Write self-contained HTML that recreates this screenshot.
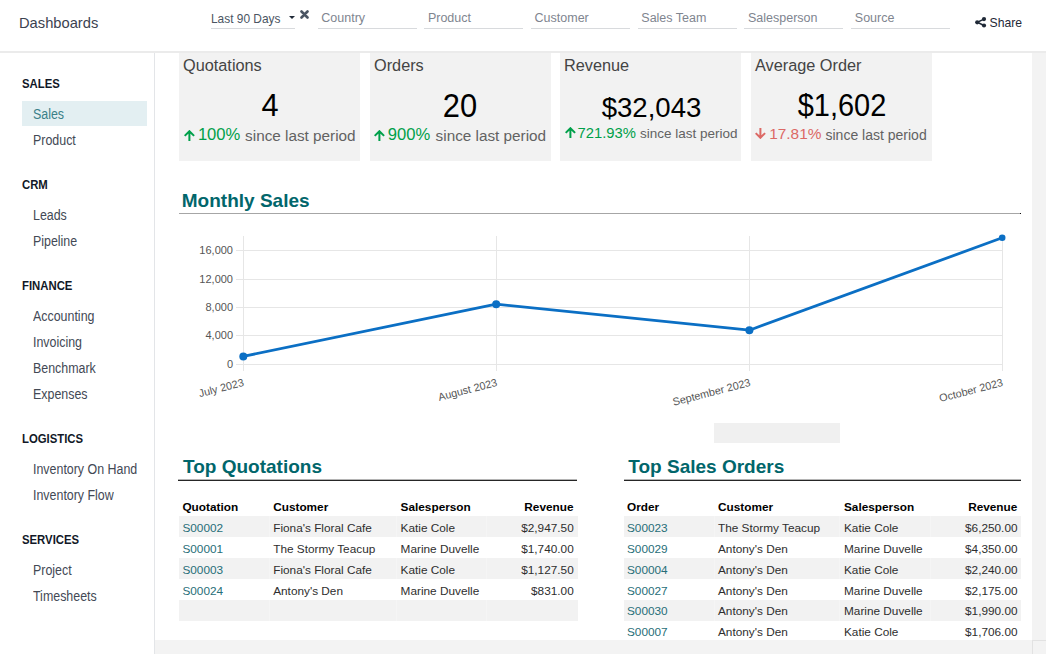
<!DOCTYPE html>
<html><head><meta charset="utf-8"><title>Dashboards</title>
<style>
html,body{margin:0;padding:0;width:1046px;height:654px;overflow:hidden;background:#fff}
body{position:relative;font-family:"Liberation Sans",sans-serif}
.t{position:absolute;white-space:nowrap;line-height:1}
.r{position:absolute}
</style></head><body>
<div class="r" style="left:0px;top:51px;width:1046px;height:2px;background:#ebebeb;"></div>
<div class="t" style="left:18.80px;top:15.20px;font-size:15px;color:#3b4250;transform:scaleX(0.98);transform-origin:0 0;">Dashboards</div>
<div class="r" style="left:211px;top:28px;width:84px;height:1px;background:#d8dadd;"></div>
<div class="t" style="left:211.00px;top:13.93px;font-size:11.9px;color:#4b5563;">Last 90 Days</div>
<div class="r" style="left:289px;top:16px;width:0;height:0;border-left:3px solid transparent;border-right:3px solid transparent;border-top:3.6px solid #1f2937;background:none"></div>
<svg class="r" style="left:300.2px;top:9.6px" width="9" height="9" viewBox="0 0 9 9"><path d="M1.5 1.5L7.5 7.5M7.5 1.5L1.5 7.5" stroke="#4b5563" stroke-width="2.6" stroke-linecap="round"/></svg>
<div class="r" style="left:318px;top:28px;width:99px;height:1px;background:#d8dadd;"></div>
<div class="t" style="left:321.30px;top:12.42px;font-size:12.5px;color:#80858f;">Country</div>
<div class="r" style="left:424px;top:28px;width:99px;height:1px;background:#d8dadd;"></div>
<div class="t" style="left:427.90px;top:12.42px;font-size:12.5px;color:#80858f;">Product</div>
<div class="r" style="left:531px;top:28px;width:99px;height:1px;background:#d8dadd;"></div>
<div class="t" style="left:534.60px;top:12.42px;font-size:12.5px;color:#80858f;">Customer</div>
<div class="r" style="left:638px;top:28px;width:99px;height:1px;background:#d8dadd;"></div>
<div class="t" style="left:641.30px;top:12.42px;font-size:12.5px;color:#80858f;">Sales Team</div>
<div class="r" style="left:744px;top:28px;width:99px;height:1px;background:#d8dadd;"></div>
<div class="t" style="left:748.00px;top:12.42px;font-size:12.5px;color:#80858f;">Salesperson</div>
<div class="r" style="left:851px;top:28px;width:99px;height:1px;background:#d8dadd;"></div>
<div class="t" style="left:854.80px;top:12.42px;font-size:12.5px;color:#80858f;">Source</div>
<svg class="r" style="left:974.8px;top:16.6px" width="12" height="11" viewBox="0 0 12 11"><path d="M9 2.1L2.3 5.3L9 8.5" stroke="#1f2937" stroke-width="1.5" fill="none"/><circle cx="9" cy="2.1" r="2.1" fill="#1f2937"/><circle cx="2.2" cy="5.3" r="2.1" fill="#1f2937"/><circle cx="9" cy="8.5" r="2.1" fill="#1f2937"/></svg>
<div class="t" style="left:989.50px;top:17.37px;font-size:12.2px;color:#1f2937;">Share</div>
<div class="r" style="left:154px;top:53px;width:1px;height:601px;background:#e3e5e8;"></div>
<div class="r" style="left:22px;top:101px;width:125px;height:25px;background:#e3eff2;"></div>
<div class="t" style="left:22.00px;top:78.43px;font-size:12.6px;color:#111827;font-weight:700;transform:scaleX(0.9);transform-origin:0 0;">SALES</div>
<div class="t" style="left:33.00px;top:108.07px;font-size:13.8px;color:#3a8088;transform:scaleX(0.9);transform-origin:0 0;">Sales</div>
<div class="t" style="left:33.00px;top:134.07px;font-size:13.8px;color:#434955;transform:scaleX(0.9);transform-origin:0 0;">Product</div>
<div class="t" style="left:22.00px;top:179.43px;font-size:12.6px;color:#111827;font-weight:700;transform:scaleX(0.9);transform-origin:0 0;">CRM</div>
<div class="t" style="left:33.00px;top:209.07px;font-size:13.8px;color:#434955;transform:scaleX(0.9);transform-origin:0 0;">Leads</div>
<div class="t" style="left:33.00px;top:235.07px;font-size:13.8px;color:#434955;transform:scaleX(0.9);transform-origin:0 0;">Pipeline</div>
<div class="t" style="left:22.00px;top:280.43px;font-size:12.6px;color:#111827;font-weight:700;transform:scaleX(0.9);transform-origin:0 0;">FINANCE</div>
<div class="t" style="left:33.00px;top:310.07px;font-size:13.8px;color:#434955;transform:scaleX(0.9);transform-origin:0 0;">Accounting</div>
<div class="t" style="left:33.00px;top:336.07px;font-size:13.8px;color:#434955;transform:scaleX(0.9);transform-origin:0 0;">Invoicing</div>
<div class="t" style="left:33.00px;top:362.07px;font-size:13.8px;color:#434955;transform:scaleX(0.9);transform-origin:0 0;">Benchmark</div>
<div class="t" style="left:33.00px;top:388.07px;font-size:13.8px;color:#434955;transform:scaleX(0.9);transform-origin:0 0;">Expenses</div>
<div class="t" style="left:22.00px;top:433.43px;font-size:12.6px;color:#111827;font-weight:700;transform:scaleX(0.9);transform-origin:0 0;">LOGISTICS</div>
<div class="t" style="left:33.00px;top:463.07px;font-size:13.8px;color:#434955;transform:scaleX(0.9);transform-origin:0 0;">Inventory On Hand</div>
<div class="t" style="left:33.00px;top:489.07px;font-size:13.8px;color:#434955;transform:scaleX(0.9);transform-origin:0 0;">Inventory Flow</div>
<div class="t" style="left:22.00px;top:534.43px;font-size:12.6px;color:#111827;font-weight:700;transform:scaleX(0.9);transform-origin:0 0;">SERVICES</div>
<div class="t" style="left:33.00px;top:564.07px;font-size:13.8px;color:#434955;transform:scaleX(0.9);transform-origin:0 0;">Project</div>
<div class="t" style="left:33.00px;top:590.07px;font-size:13.8px;color:#434955;transform:scaleX(0.9);transform-origin:0 0;">Timesheets</div>
<div class="r" style="left:179px;top:53px;width:181px;height:108px;background:#f2f2f2;"></div>
<div class="t" style="left:183.00px;top:56.80px;font-size:16.3px;color:#444444;">Quotations</div>
<div class="t" style="left:119.50px;width:300px;text-align:center;top:89.31px;font-size:32px;color:#000000;transform:scaleX(0.96);">4</div>
<svg class="r" style="left:183.5px;top:129.7px" width="11" height="11" viewBox="0 0 11 11"><path d="M5.4 11V1.2M0.7 5.9L5.4 1.2L10.1 5.9" stroke="#00a04a" stroke-width="2" fill="none"/></svg>
<div class="t" style="left:197.90px;top:126.95px;font-size:16.6px;color:#00a04a;">100%</div>
<div class="t" style="left:245.10px;top:128.05px;font-size:15.3px;color:#626262;">since last period</div>
<div class="r" style="left:370px;top:53px;width:181px;height:108px;background:#f2f2f2;"></div>
<div class="t" style="left:374.00px;top:56.80px;font-size:16.3px;color:#444444;">Orders</div>
<div class="t" style="left:310.00px;width:300px;text-align:center;top:90.29px;font-size:32.5px;color:#000000;transform:scaleX(0.95);">20</div>
<svg class="r" style="left:373.8px;top:129.7px" width="11" height="11" viewBox="0 0 11 11"><path d="M5.4 11V1.2M0.7 5.9L5.4 1.2L10.1 5.9" stroke="#00a04a" stroke-width="2" fill="none"/></svg>
<div class="t" style="left:387.80px;top:126.95px;font-size:16.6px;color:#00a04a;">900%</div>
<div class="t" style="left:435.60px;top:128.05px;font-size:15.3px;color:#626262;">since last period</div>
<div class="r" style="left:560px;top:53px;width:181px;height:108px;background:#f2f2f2;"></div>
<div class="t" style="left:564.00px;top:56.80px;font-size:16.3px;color:#444444;">Revenue</div>
<div class="t" style="left:501.50px;width:300px;text-align:center;top:93.74px;font-size:27.6px;color:#000000;transform:scaleX(1.0);">$32,043</div>
<svg class="r" style="left:565.2px;top:127.2px" width="11" height="11" viewBox="0 0 11 11"><path d="M5.4 11V1.2M0.7 5.9L5.4 1.2L10.1 5.9" stroke="#00a04a" stroke-width="2" fill="none"/></svg>
<div class="t" style="left:577.50px;top:125.97px;font-size:14.8px;color:#00a04a;">721.93%</div>
<div class="t" style="left:639.90px;top:127.07px;font-size:13.5px;color:#626262;">since last period</div>
<div class="r" style="left:751px;top:53px;width:181px;height:108px;background:#f2f2f2;"></div>
<div class="t" style="left:755.00px;top:56.80px;font-size:16.3px;color:#444444;">Average Order</div>
<div class="t" style="left:692.00px;width:300px;text-align:center;top:90.18px;font-size:30.5px;color:#000000;transform:scaleX(0.95);">$1,602</div>
<svg class="r" style="left:755.1px;top:128.1px" width="11" height="11" viewBox="0 0 11 11"><path d="M5.4 0V9.8M0.7 5.1L5.4 9.8L10.1 5.1" stroke="#dc6965" stroke-width="2" fill="none"/></svg>
<div class="t" style="left:769.20px;top:126.36px;font-size:15.4px;color:#dc6965;">17.81%</div>
<div class="t" style="left:825.50px;top:127.55px;font-size:14px;color:#626262;">since last period</div>
<div class="t" style="left:181.80px;top:190.72px;font-size:19px;color:#01666b;font-weight:700;">Monthly Sales</div>
<div class="r" style="left:179px;top:213px;width:841px;height:1px;background:#a6a6a6;"></div>
<div class="r" style="left:1020px;top:213px;width:1px;height:1px;background:#111111;"></div>
<svg class="r" style="left:0;top:0" width="1046" height="654" viewBox="0 0 1046 654"><line x1="236" y1="250.5" x2="1003" y2="250.5" stroke="#e6e6e6" stroke-width="1"/><line x1="236" y1="279.5" x2="1003" y2="279.5" stroke="#e6e6e6" stroke-width="1"/><line x1="236" y1="307.5" x2="1003" y2="307.5" stroke="#e6e6e6" stroke-width="1"/><line x1="236" y1="335.5" x2="1003" y2="335.5" stroke="#e6e6e6" stroke-width="1"/><line x1="236" y1="364.5" x2="1003" y2="364.5" stroke="#e6e6e6" stroke-width="1"/><line x1="243.5" y1="236" x2="243.5" y2="371" stroke="#e6e6e6" stroke-width="1"/><line x1="496.5" y1="236" x2="496.5" y2="371" stroke="#e6e6e6" stroke-width="1"/><line x1="749.5" y1="236" x2="749.5" y2="371" stroke="#e6e6e6" stroke-width="1"/><line x1="1002.5" y1="236" x2="1002.5" y2="371" stroke="#e6e6e6" stroke-width="1"/><polyline points="243.3,356.4 496.2,304.2 749.4,330.2 1002.2,237.8" fill="none" stroke="#0b6fc4" stroke-width="2.8" stroke-linejoin="round"/><circle cx="243.3" cy="356.4" r="4" fill="#0b6fc4"/><circle cx="496.2" cy="304.2" r="4" fill="#0b6fc4"/><circle cx="749.4" cy="330.2" r="4" fill="#0b6fc4"/><circle cx="1002.2" cy="237.8" r="3.3" fill="#0b6fc4"/></svg>
<div class="t" style="right:813.00px;top:244.59px;font-size:11px;color:#555555;">16,000</div>
<div class="t" style="right:813.00px;top:273.59px;font-size:11px;color:#555555;">12,000</div>
<div class="t" style="right:813.00px;top:301.59px;font-size:11px;color:#555555;">8,000</div>
<div class="t" style="right:813.00px;top:329.59px;font-size:11px;color:#555555;">4,000</div>
<div class="t" style="right:813.00px;top:358.59px;font-size:11px;color:#555555;">0</div>
<div class="t" style="right:803.3px;top:376.5px;font-size:10.8px;line-height:11px;color:#555555;transform:rotate(-14.5deg);transform-origin:100% 0">July 2023</div>
<div class="t" style="right:550.3px;top:376.5px;font-size:10.8px;line-height:11px;color:#555555;transform:rotate(-14.5deg);transform-origin:100% 0">August 2023</div>
<div class="t" style="right:297.3px;top:376.5px;font-size:10.8px;line-height:11px;color:#555555;transform:rotate(-14.5deg);transform-origin:100% 0">September 2023</div>
<div class="t" style="right:44.3px;top:376.5px;font-size:10.8px;line-height:11px;color:#555555;transform:rotate(-14.5deg);transform-origin:100% 0">October 2023</div>
<div class="r" style="left:714px;top:423px;width:126px;height:20px;background:#f0f0f0;"></div>
<div class="t" style="left:183.00px;top:456.92px;font-size:19px;color:#01666b;font-weight:700;">Top Quotations</div>
<div class="r" style="left:178px;top:479px;width:399px;height:1px;background:#b4b4b4;"></div>
<div class="r" style="left:178px;top:480px;width:399px;height:1px;background:#262626;"></div>
<div class="t" style="left:182.40px;top:501.51px;font-size:11.8px;color:#000000;font-weight:700;">Quotation</div>
<div class="t" style="left:273.20px;top:501.51px;font-size:11.8px;color:#000000;font-weight:700;">Customer</div>
<div class="t" style="left:400.60px;top:501.51px;font-size:11.8px;color:#000000;font-weight:700;">Salesperson</div>
<div class="t" style="right:472.50px;top:501.51px;font-size:11.8px;color:#000000;font-weight:700;">Revenue</div>
<div class="r" style="left:178.5px;top:516.3px;width:399px;height:20.9px;background:#f2f2f2;"></div>
<div class="r" style="left:269px;top:516.3px;width:1px;height:20.9px;background:#f5f5f5;"></div>
<div class="r" style="left:396px;top:516.3px;width:1px;height:20.9px;background:#f5f5f5;"></div>
<div class="r" style="left:486px;top:516.3px;width:1px;height:20.9px;background:#f5f5f5;"></div>
<div class="r" style="left:178.5px;top:558.0px;width:399px;height:20.9px;background:#f2f2f2;"></div>
<div class="r" style="left:269px;top:558.0px;width:1px;height:20.9px;background:#f5f5f5;"></div>
<div class="r" style="left:396px;top:558.0px;width:1px;height:20.9px;background:#f5f5f5;"></div>
<div class="r" style="left:486px;top:558.0px;width:1px;height:20.9px;background:#f5f5f5;"></div>
<div class="r" style="left:178.5px;top:599.7px;width:399px;height:20.9px;background:#f2f2f2;"></div>
<div class="r" style="left:269px;top:599.7px;width:1px;height:20.9px;background:#f5f5f5;"></div>
<div class="r" style="left:396px;top:599.7px;width:1px;height:20.9px;background:#f5f5f5;"></div>
<div class="r" style="left:486px;top:599.7px;width:1px;height:20.9px;background:#f5f5f5;"></div>
<div class="t" style="left:182.40px;top:523.21px;font-size:11.8px;color:#276e78;">S00002</div>
<div class="t" style="left:273.20px;top:523.21px;font-size:11.8px;color:#2e2e2e;">Fiona's Floral Cafe</div>
<div class="t" style="left:400.60px;top:523.21px;font-size:11.8px;color:#2e2e2e;">Katie Cole</div>
<div class="t" style="right:472.30px;top:523.21px;font-size:11.8px;color:#2e2e2e;">$2,947.50</div>
<div class="t" style="left:182.40px;top:544.01px;font-size:11.8px;color:#276e78;">S00001</div>
<div class="t" style="left:273.20px;top:544.01px;font-size:11.8px;color:#2e2e2e;">The Stormy Teacup</div>
<div class="t" style="left:400.60px;top:544.01px;font-size:11.8px;color:#2e2e2e;">Marine Duvelle</div>
<div class="t" style="right:472.30px;top:544.01px;font-size:11.8px;color:#2e2e2e;">$1,740.00</div>
<div class="t" style="left:182.40px;top:564.81px;font-size:11.8px;color:#276e78;">S00003</div>
<div class="t" style="left:273.20px;top:564.81px;font-size:11.8px;color:#2e2e2e;">Fiona's Floral Cafe</div>
<div class="t" style="left:400.60px;top:564.81px;font-size:11.8px;color:#2e2e2e;">Katie Cole</div>
<div class="t" style="right:472.30px;top:564.81px;font-size:11.8px;color:#2e2e2e;">$1,127.50</div>
<div class="t" style="left:182.40px;top:585.61px;font-size:11.8px;color:#276e78;">S00024</div>
<div class="t" style="left:273.20px;top:585.61px;font-size:11.8px;color:#2e2e2e;">Antony's Den</div>
<div class="t" style="left:400.60px;top:585.61px;font-size:11.8px;color:#2e2e2e;">Marine Duvelle</div>
<div class="t" style="right:472.30px;top:585.61px;font-size:11.8px;color:#2e2e2e;">$831.00</div>
<div class="t" style="left:628.30px;top:456.92px;font-size:19px;color:#01666b;font-weight:700;">Top Sales Orders</div>
<div class="r" style="left:624px;top:479px;width:397px;height:1px;background:#b4b4b4;"></div>
<div class="r" style="left:624px;top:480px;width:397px;height:1px;background:#262626;"></div>
<div class="t" style="left:627.00px;top:501.51px;font-size:11.8px;color:#000000;font-weight:700;">Order</div>
<div class="t" style="left:718.00px;top:501.51px;font-size:11.8px;color:#000000;font-weight:700;">Customer</div>
<div class="t" style="left:844.00px;top:501.51px;font-size:11.8px;color:#000000;font-weight:700;">Salesperson</div>
<div class="t" style="right:28.70px;top:501.51px;font-size:11.8px;color:#000000;font-weight:700;">Revenue</div>
<div class="r" style="left:623.8px;top:516.3px;width:397.5px;height:20.9px;background:#f2f2f2;"></div>
<div class="r" style="left:714px;top:516.3px;width:1px;height:20.9px;background:#f5f5f5;"></div>
<div class="r" style="left:839px;top:516.3px;width:1px;height:20.9px;background:#f5f5f5;"></div>
<div class="r" style="left:930px;top:516.3px;width:1px;height:20.9px;background:#f5f5f5;"></div>
<div class="r" style="left:623.8px;top:558.0px;width:397.5px;height:20.9px;background:#f2f2f2;"></div>
<div class="r" style="left:714px;top:558.0px;width:1px;height:20.9px;background:#f5f5f5;"></div>
<div class="r" style="left:839px;top:558.0px;width:1px;height:20.9px;background:#f5f5f5;"></div>
<div class="r" style="left:930px;top:558.0px;width:1px;height:20.9px;background:#f5f5f5;"></div>
<div class="r" style="left:623.8px;top:599.7px;width:397.5px;height:20.9px;background:#f2f2f2;"></div>
<div class="r" style="left:714px;top:599.7px;width:1px;height:20.9px;background:#f5f5f5;"></div>
<div class="r" style="left:839px;top:599.7px;width:1px;height:20.9px;background:#f5f5f5;"></div>
<div class="r" style="left:930px;top:599.7px;width:1px;height:20.9px;background:#f5f5f5;"></div>
<div class="t" style="left:627.00px;top:523.21px;font-size:11.8px;color:#276e78;">S00023</div>
<div class="t" style="left:718.00px;top:523.21px;font-size:11.8px;color:#2e2e2e;">The Stormy Teacup</div>
<div class="t" style="left:844.00px;top:523.21px;font-size:11.8px;color:#2e2e2e;">Katie Cole</div>
<div class="t" style="right:28.50px;top:523.21px;font-size:11.8px;color:#2e2e2e;">$6,250.00</div>
<div class="t" style="left:627.00px;top:544.01px;font-size:11.8px;color:#276e78;">S00029</div>
<div class="t" style="left:718.00px;top:544.01px;font-size:11.8px;color:#2e2e2e;">Antony's Den</div>
<div class="t" style="left:844.00px;top:544.01px;font-size:11.8px;color:#2e2e2e;">Marine Duvelle</div>
<div class="t" style="right:28.50px;top:544.01px;font-size:11.8px;color:#2e2e2e;">$4,350.00</div>
<div class="t" style="left:627.00px;top:564.81px;font-size:11.8px;color:#276e78;">S00004</div>
<div class="t" style="left:718.00px;top:564.81px;font-size:11.8px;color:#2e2e2e;">Antony's Den</div>
<div class="t" style="left:844.00px;top:564.81px;font-size:11.8px;color:#2e2e2e;">Katie Cole</div>
<div class="t" style="right:28.50px;top:564.81px;font-size:11.8px;color:#2e2e2e;">$2,240.00</div>
<div class="t" style="left:627.00px;top:585.61px;font-size:11.8px;color:#276e78;">S00027</div>
<div class="t" style="left:718.00px;top:585.61px;font-size:11.8px;color:#2e2e2e;">Antony's Den</div>
<div class="t" style="left:844.00px;top:585.61px;font-size:11.8px;color:#2e2e2e;">Marine Duvelle</div>
<div class="t" style="right:28.50px;top:585.61px;font-size:11.8px;color:#2e2e2e;">$2,175.00</div>
<div class="t" style="left:627.00px;top:606.41px;font-size:11.8px;color:#276e78;">S00030</div>
<div class="t" style="left:718.00px;top:606.41px;font-size:11.8px;color:#2e2e2e;">Antony's Den</div>
<div class="t" style="left:844.00px;top:606.41px;font-size:11.8px;color:#2e2e2e;">Marine Duvelle</div>
<div class="t" style="right:28.50px;top:606.41px;font-size:11.8px;color:#2e2e2e;">$1,990.00</div>
<div class="t" style="left:627.00px;top:627.21px;font-size:11.8px;color:#276e78;">S00007</div>
<div class="t" style="left:718.00px;top:627.21px;font-size:11.8px;color:#2e2e2e;">Antony's Den</div>
<div class="t" style="left:844.00px;top:627.21px;font-size:11.8px;color:#2e2e2e;">Katie Cole</div>
<div class="t" style="right:28.50px;top:627.21px;font-size:11.8px;color:#2e2e2e;">$1,706.00</div>
<div class="r" style="left:155px;top:640px;width:877px;height:14px;background:#f3f3f3;"></div>
<div class="r" style="left:1032px;top:53px;width:14px;height:587px;background:#f3f3f3;"></div>
<div class="r" style="left:1032px;top:640px;width:14px;height:14px;background:#f3f3f3;box-sizing:border-box;border-left:1px solid #e2e2e2;border-top:1px solid #e2e2e2"></div>
</body></html>
